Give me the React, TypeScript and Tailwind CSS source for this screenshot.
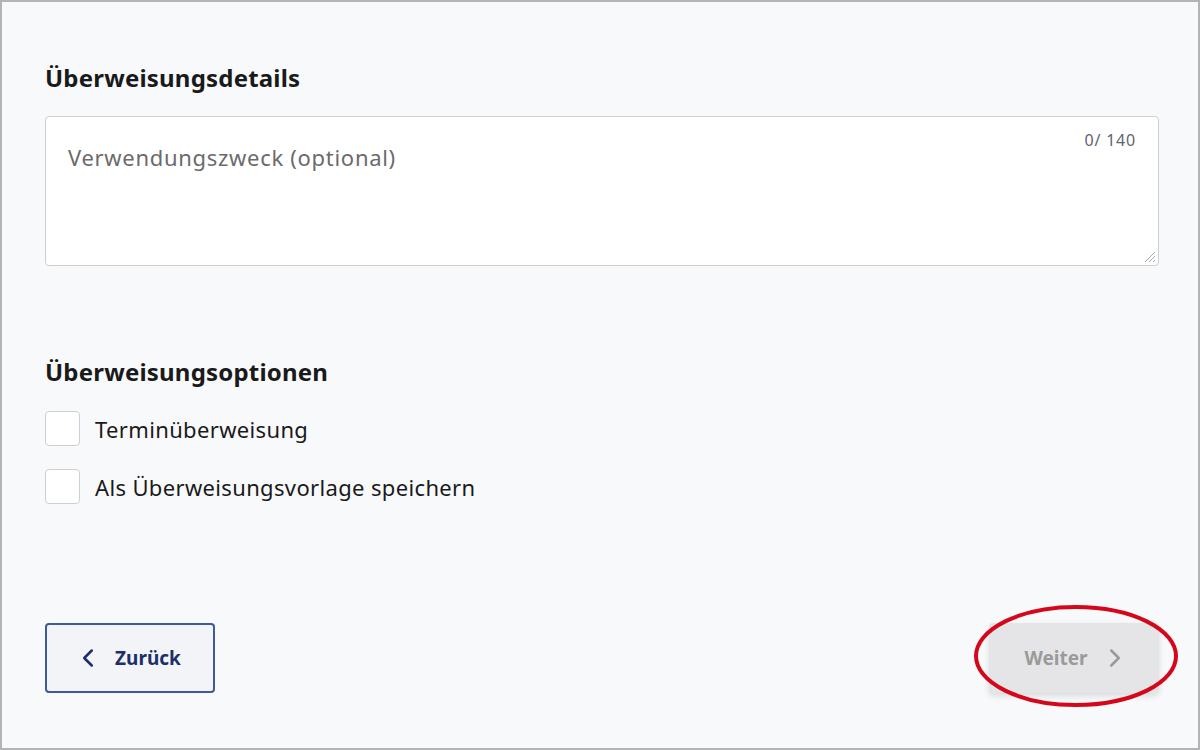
import { ChevronLeft, ChevronRight } from 'lucide-react';

export default function App() {
  return (
    <div
      className="relative w-[1200px] h-[750px] border-2 border-[#b4b4b4] bg-[#f8f9fb] text-[#1a1a1a] flex flex-col pl-[43px] pr-[39px]"
      style={{ fontFamily: '"Noto Sans", "Open Sans", sans-serif' }}
    >
      {/* Details */}
      <h2 className="mt-[61px] text-[24px] leading-[30px] font-bold tracking-[0.2px]">Überweisungsdetails</h2>
      <div className="relative mt-[23px] h-[150px] bg-white border border-[#cfcfcf] rounded-[4px]">
        <div className="pl-[22px] pt-[25px] text-[22px] leading-[30px] text-[#6b6b6b] tracking-[0.7px]">Verwendungszweck (optional)</div>
        <span className="absolute right-[22px] top-[11px] text-[16px] text-[#5f6470] tracking-[0.8px]">0/ 140</span>
        <svg className="absolute right-[2px] bottom-[2px]" width="14" height="14" viewBox="0 0 14 14">
          <path d="M13 3 L3 13 M13 7 L7 13 M13 11 L11 13" stroke="#a8a8a8" strokeWidth="1" />
        </svg>
      </div>

      {/* Options */}
      <h2 className="mt-[91px] text-[24px] leading-[30px] font-bold tracking-[0.2px]">Überweisungsoptionen</h2>
      <div className="mt-[24px] flex flex-col gap-[23px]">
        <Option label="Terminüberweisung" />
        <Option label="Als Überweisungsvorlage speichern" />
      </div>

      {/* Actions */}
      <div className="mt-auto mb-[55px] flex justify-between">
        <button className="w-[170px] h-[70px] flex items-center justify-center gap-[12px] rounded-[4px] border-2 border-[#3e5a9a] bg-[#f3f4f7] text-[#1b2f6b] text-[19px] font-bold">
          <ChevronLeft className="w-[30px] h-[30px] -ml-[6px]" strokeWidth={2} />
          <span>Zurück</span>
        </button>
        <button className="w-[170px] h-[70px] flex items-center justify-center gap-[12px] rounded-[4px] bg-[#e5e5e7] text-[#9a9a9a] text-[19px] font-bold shadow-[0_3px_6px_rgba(0,0,0,0.12)]">
          <span>Weiter</span>
          <ChevronRight className="w-[30px] h-[30px] -mr-[6px]" strokeWidth={2} />
        </button>
      </div>

      {/* annotation */}
      <svg className="absolute left-[970px] top-[600px] pointer-events-none" width="210" height="110" viewBox="0 0 210 110">
        <ellipse cx="104" cy="54" rx="100" ry="49" fill="none" stroke="#d4071b" strokeWidth="4" />
      </svg>
    </div>
  );
}

function Option({ label }: { label: string }) {
  return (
    <label className="flex items-center gap-[15px]">
      <span className="w-[35px] h-[35px] rounded-[4px] border border-[#cfcfcf] bg-white" />
      <span className="text-[22px] leading-[30px] text-[#1a1a1a] tracking-[0.35px]">{label}</span>
    </label>
  );
}
